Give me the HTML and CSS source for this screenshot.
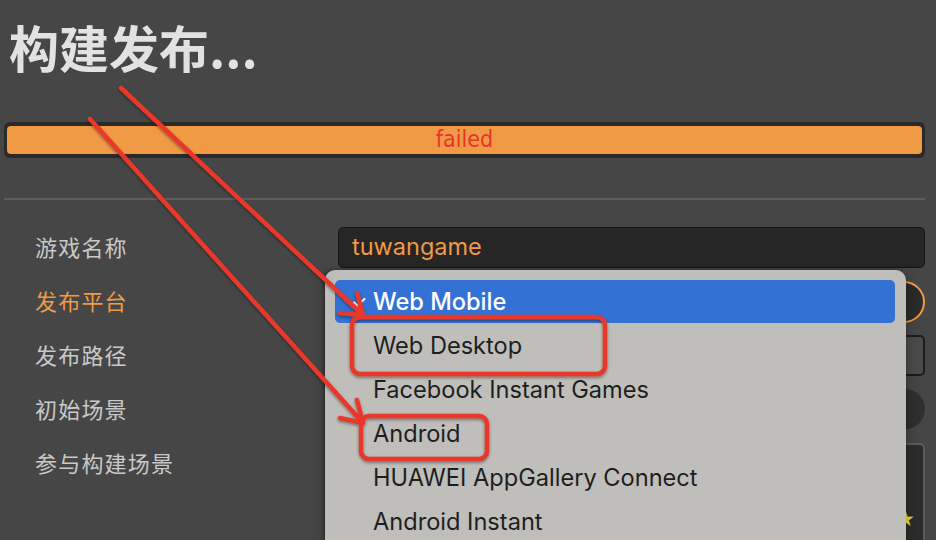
FILE: index.html
```html
<!DOCTYPE html>
<html lang="zh-CN">
<head>
<meta charset="utf-8">
<title>构建发布</title>
<link rel="stylesheet" href="styles.css">
</head>
<body>
<div class="page">
  <h1 class="title">构建发布...</h1>
  <div class="progress"><div class="progress-fill">failed</div></div>
  <div class="divider"></div>
  <div class="form">
    <div class="label">游戏名称</div>
    <div class="control"><div class="input">tuwangame</div></div>

    <div class="label active">发布平台</div>
    <div class="control"><div class="select"></div></div>

    <div class="label">发布路径</div>
    <div class="control path"><div class="input path-input"></div><div class="btn"></div></div>

    <div class="label">初始场景</div>
    <div class="control"><div class="pill"></div></div>

    <div class="label">参与构建场景</div>
    <div class="control"><div class="scenes"><span class="star">★</span></div></div>

    <div class="menu">
      <div class="item selected"><span class="check">✓</span>Web Mobile</div>
      <div class="item">Web Desktop</div>
      <div class="item">Facebook Instant Games</div>
      <div class="item">Android</div>
      <div class="item">HUAWEI AppGallery Connect</div>
      <div class="item">Android Instant</div>
    </div>
  </div>
</div>
<svg class="annot" width="936" height="540" viewBox="0 0 936 540">
  <defs>
    <filter id="sh" x="-10%" y="-10%" width="120%" height="120%">
      <feDropShadow dx="0" dy="1.5" stdDeviation="1.5" flood-color="#000" flood-opacity="0.45"/>
    </filter>
  </defs>
  <g fill="none" stroke="#e8372b" stroke-width="4.5" stroke-linecap="round" stroke-linejoin="round" filter="url(#sh)">
    <rect x="352" y="317" width="253" height="57" rx="8"/>
    <rect x="361" y="416" width="126" height="43" rx="8"/>
    <path d="M121 88 L363 315 M357 293 L363 315 L340 313"/>
    <path d="M90 119 L363 423 M357 400 L363 423 L340 418"/>
  </g>
</svg>
</body>
</html>
```
FILE: styles.css
```css
html, body {
  margin: 0;
  padding: 0;
  background: #464646;
  width: 936px;
  height: 540px;
  overflow: hidden;
  font-family: "Inter", "Noto Sans CJK SC", sans-serif;
}
.page {
  padding: 0 11px 0 4px;
  position: relative;
}
.title {
  margin: 16px 0 0 5px;
  font-family: "Noto Sans CJK SC", sans-serif;
  font-weight: 700;
  font-size: 50px;
  line-height: 60px;
  color: #e2e2e2;
  letter-spacing: 0;
}
.progress {
  margin-top: 46px;
  height: 36px;
  box-sizing: border-box;
  padding: 4px 3px;
  background: #2a2a2a;
  border-radius: 6px;
}
.progress-fill {
  height: 28px;
  background: #f09a45;
  border-radius: 4px;
  color: #e8352b;
  text-align: center;
  font-family: "DejaVu Sans Condensed", "DejaVu Sans", sans-serif;
  font-size: 23px;
  line-height: 26px;
}
.divider {
  margin-top: 40px;
  height: 2px;
  background: #5d5d5d;
}
.form {
  position: relative;
  margin-top: 27px;
  padding-left: 31px;
  display: grid;
  grid-template-columns: 303px 1fr;
  grid-template-rows: 41px 41px 41px 41px 97px;
  row-gap: 13px;
  align-items: start;
}
.label {
  font-family: "Noto Sans CJK SC", sans-serif;
  font-size: 22px;
  line-height: 39px;
  color: #c9c9c9;
  letter-spacing: 1.2px;
}
.label.active { color: #f09a45; }
.control { height: 41px; }
.input {
  height: 41px;
  box-sizing: border-box;
  background: #262626;
  border: 1px solid #151515;
  border-radius: 5px;
  padding-left: 13px;
  color: #f09a45;
  font-size: 23.5px;
  line-height: 38px;
}
.select {
  height: 42px;
  box-sizing: border-box;
  background: #2b2b2b;
  border: 2px solid #f09a45;
  border-radius: 21px;
}
.path { display: flex; gap: 6px; }
.path-input { flex: 1; }
.btn {
  width: 60px;
  height: 41px;
  box-sizing: border-box;
  background: #4a4a4a;
  border: 2px solid #1c1c1c;
  border-radius: 5px;
}
.pill {
  height: 40px;
  background: #2f2f2f;
  border-radius: 20px;
}
.control.last { height: 97px; }
.scenes {
  height: 97px;
  box-sizing: border-box;
  border: 2px solid #5b5b5b;
  border-bottom: none;
  border-radius: 5px 5px 0 0;
  background: #2c2c2c;
  display: flex;
  justify-content: flex-end;
  align-items: flex-start;
  padding: 66px 8px 0 0;
}
.star {
  color: #e4e23a;
  font-size: 18px;
  line-height: 18px;
}
.menu {
  position: absolute;
  left: 321px;
  top: 43px;
  width: 581px;
  height: 270px;
  box-sizing: border-box;
  padding: 10px 11px 0 10px;
  background: #c0bebb;
  border-radius: 10px 10px 0 0;
  box-shadow: -1px 0 3px rgba(0,0,0,0.35), 0 4px 14px rgba(0,0,0,0.3);
  overflow: hidden;
}
.item {
  height: 44px;
  padding-left: 38px;
  position: relative;
  font-size: 23.6px;
  line-height: 44px;
  color: #1e1e1e;
  white-space: nowrap;
}
.item.selected {
  height: 43px;
  line-height: 43px;
  background: #3471d5;
  border-radius: 5px;
  color: #ffffff;
  font-weight: 500;
  margin-bottom: 1px;
}
.check {
  position: absolute;
  left: 16px;
  top: 0;
  font-size: 18px;
  color: #fff;
}
.annot {
  position: absolute;
  left: 0;
  top: 0;
  pointer-events: none;
}
```
